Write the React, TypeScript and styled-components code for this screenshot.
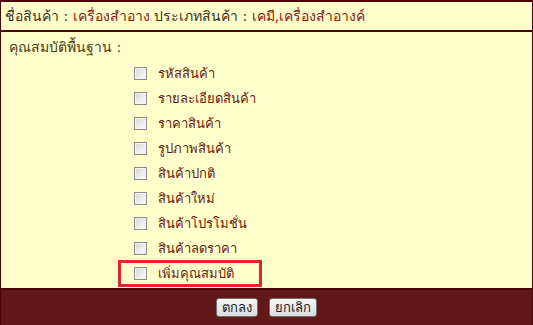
import React from 'react';
import styled, { createGlobalStyle } from 'styled-components';

const GlobalStyle = createGlobalStyle`
  body {
    margin: 0;
    background: #ffffff;
    font-family: Tahoma, "DejaVu Sans", "Noto Sans", sans-serif;
  }
`;

const Panel = styled.div`
  width: 533px;
  height: 325px;
  box-sizing: border-box;
  display: flex;
  flex-direction: column;
  background-color: #ffffcc;
  border-top: 2px solid #4a0606;
  border-left: 1px solid #4a0606;
  border-right: 1px solid #4a0606;
`;

const Header = styled.div`
  height: 28px;
  display: flex;
  align-items: center;
  padding: 0 4px;
  font-size: 14px;
  color: #3a3020;
  border-bottom: 2px solid #4a0606;
  white-space: pre;
`;

const Value = styled.span`
  color: #8b1616;
`;

const Body = styled.div`
  flex: 1;
  padding: 5px 0 0 8px;
`;

const Title = styled.div`
  height: 20px;
  line-height: 20px;
  font-size: 14px;
  color: #4a3a20;
`;

const List = styled.div`
  display: flex;
  flex-direction: column;
  padding: 4px 0 0 109px;
`;

const Row = styled.label<{ $highlight?: boolean }>`
  height: ${p => (p.$highlight ? '27px' : '25px')};
  margin-top: ${p => (p.$highlight ? '-1px' : '0')};
  width: 144px;
  box-sizing: border-box;
  display: flex;
  align-items: center;
  gap: 11px;
  padding-left: 13px;
  font-size: 13px;
  color: #6a1a10;
  border: 3px solid ${p => (p.$highlight ? '#e8232b' : 'transparent')};
  white-space: nowrap;
`;

const Box = styled.input.attrs({ type: 'checkbox' })`
  appearance: none;
  margin: 0;
  flex: none;
  width: 13px;
  height: 13px;
  border: 1px solid #8c8c8c;
  box-sizing: border-box;
  background: linear-gradient(135deg, #d6d6d6 0%, #eeeeee 60%, #fafafa 100%);
  box-shadow: inset 0 0 0 1px #f4f4f4;
`;

const Footer = styled.div`
  height: 37px;
  display: flex;
  justify-content: center;
  align-items: center;
  gap: 11px;
  box-sizing: border-box;
  background-color: #621818;
  border-top: 2px solid #4a0606;
`;

const Button = styled.button`
  height: 19px;
  padding: 0 5px;
  font-family: Tahoma, "DejaVu Sans", "Noto Sans", sans-serif;
  font-size: 13px;
  color: #1a1a2a;
  border: 1px solid #707070;
  border-radius: 3px;
  background: linear-gradient(#f6f6f6, #dedede);
  line-height: 15px;
`;

const items = [
  'รหัสสินค้า',
  'รายละเอียดสินค้า',
  'ราคาสินค้า',
  'รูปภาพสินค้า',
  'สินค้าปกติ',
  'สินค้าใหม่',
  'สินค้าโปรโมชั่น',
  'สินค้าลดราคา',
];

const App: React.FC = () => (
  <>
    <GlobalStyle />
    <Panel>
      <Header>
        ชื่อสินค้า : <Value>เครื่องสำอาง</Value> ประเภทสินค้า : <Value>เคมี,เครื่องสำอางค์</Value>
      </Header>
      <Body>
        <Title>คุณสมบัติพื้นฐาน :</Title>
        <List>
          {items.map(item => (
            <Row key={item}>
              <Box />
              {item}
            </Row>
          ))}
          <Row $highlight>
            <Box />
            เพิ่มคุณสมบัติ
          </Row>
        </List>
      </Body>
      <Footer>
        <Button>ตกลง</Button>
        <Button>ยกเลิก</Button>
      </Footer>
    </Panel>
  </>
);

export default App;
